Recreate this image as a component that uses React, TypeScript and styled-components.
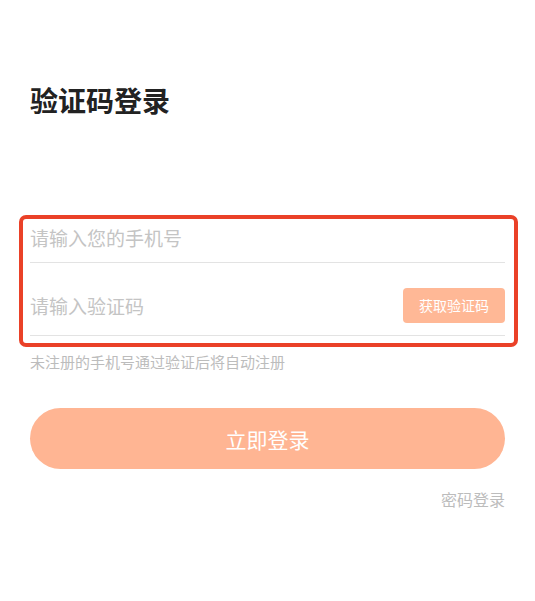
import { createGlobalStyle, styled } from "styled-components";

const GlobalStyle = createGlobalStyle`
  html, body {
    margin: 0;
    padding: 0;
    background: #fff;
  }

  body {
    font-family: "Noto Sans CJK SC", "Noto Sans", sans-serif;
  }

  * {
    box-sizing: border-box;
  }
`;

const Page = styled.div`
  width: 535px;
  min-height: 601px;
  padding: 86px 30px 0;
  display: flex;
  flex-direction: column;
`;

const Title = styled.h1`
  margin: 0;
  font-size: 28px;
  line-height: 28px;
  font-weight: 700;
  color: #222;
`;

const Form = styled.div`
  margin: 101px -13px 0 -11px;
  padding: 0 9px 7px 7px;
  border: 4px solid #ea4128;
  border-radius: 7px;
  display: flex;
  flex-direction: column;
`;

const Field = styled.div<{ $height: number; $padTop?: number; $padBottom?: number }>`
  height: ${(p) => p.$height}px;
  padding-top: ${(p) => p.$padTop ?? 0}px;
  padding-bottom: ${(p) => p.$padBottom ?? 0}px;
  border-bottom: 1px solid #e3e3e3;
  display: flex;
  align-items: center;
  gap: 12px;
`;

const Input = styled.input`
  flex: 1;
  min-width: 0;
  border: none;
  outline: none;
  padding: 0;
  background: transparent;
  font-family: inherit;
  font-size: 19px;
  color: #333;

  &::placeholder {
    color: #c4c4c4;
  }
`;

const CodeButton = styled.button`
  height: 35px;
  padding: 0 16px;
  border: none;
  border-radius: 4px;
  background: #ffb896;
  color: #fff;
  font-family: inherit;
  font-size: 14px;
  cursor: pointer;
`;

const Hint = styled.p`
  margin: 7px 0 0;
  font-size: 15px;
  line-height: 15px;
  color: #bcbcbc;
`;

const LoginButton = styled.button`
  margin-top: 39px;
  height: 61px;
  border: none;
  border-radius: 31px;
  background: #ffb593;
  color: #fff;
  font-family: inherit;
  font-size: 21px;
  cursor: pointer;
`;

const SwitchRow = styled.div`
  margin-top: 22px;
  display: flex;
  justify-content: flex-end;
`;

const SwitchLink = styled.a`
  font-size: 16px;
  line-height: 16px;
  color: #bcbcbc;
  cursor: pointer;
`;

function App() {
  return (
    <>
      <GlobalStyle />
      <Page>
        <Title>验证码登录</Title>
        <Form>
          <Field $height={44} $padBottom={6}>
            <Input type="tel" placeholder="请输入您的手机号" />
          </Field>
          <Field $height={73} $padTop={12}>
            <Input type="text" placeholder="请输入验证码" />
            <CodeButton>获取验证码</CodeButton>
          </Field>
        </Form>
        <Hint>未注册的手机号通过验证后将自动注册</Hint>
        <LoginButton>立即登录</LoginButton>
        <SwitchRow>
          <SwitchLink>密码登录</SwitchLink>
        </SwitchRow>
      </Page>
    </>
  );
}

export default App;
